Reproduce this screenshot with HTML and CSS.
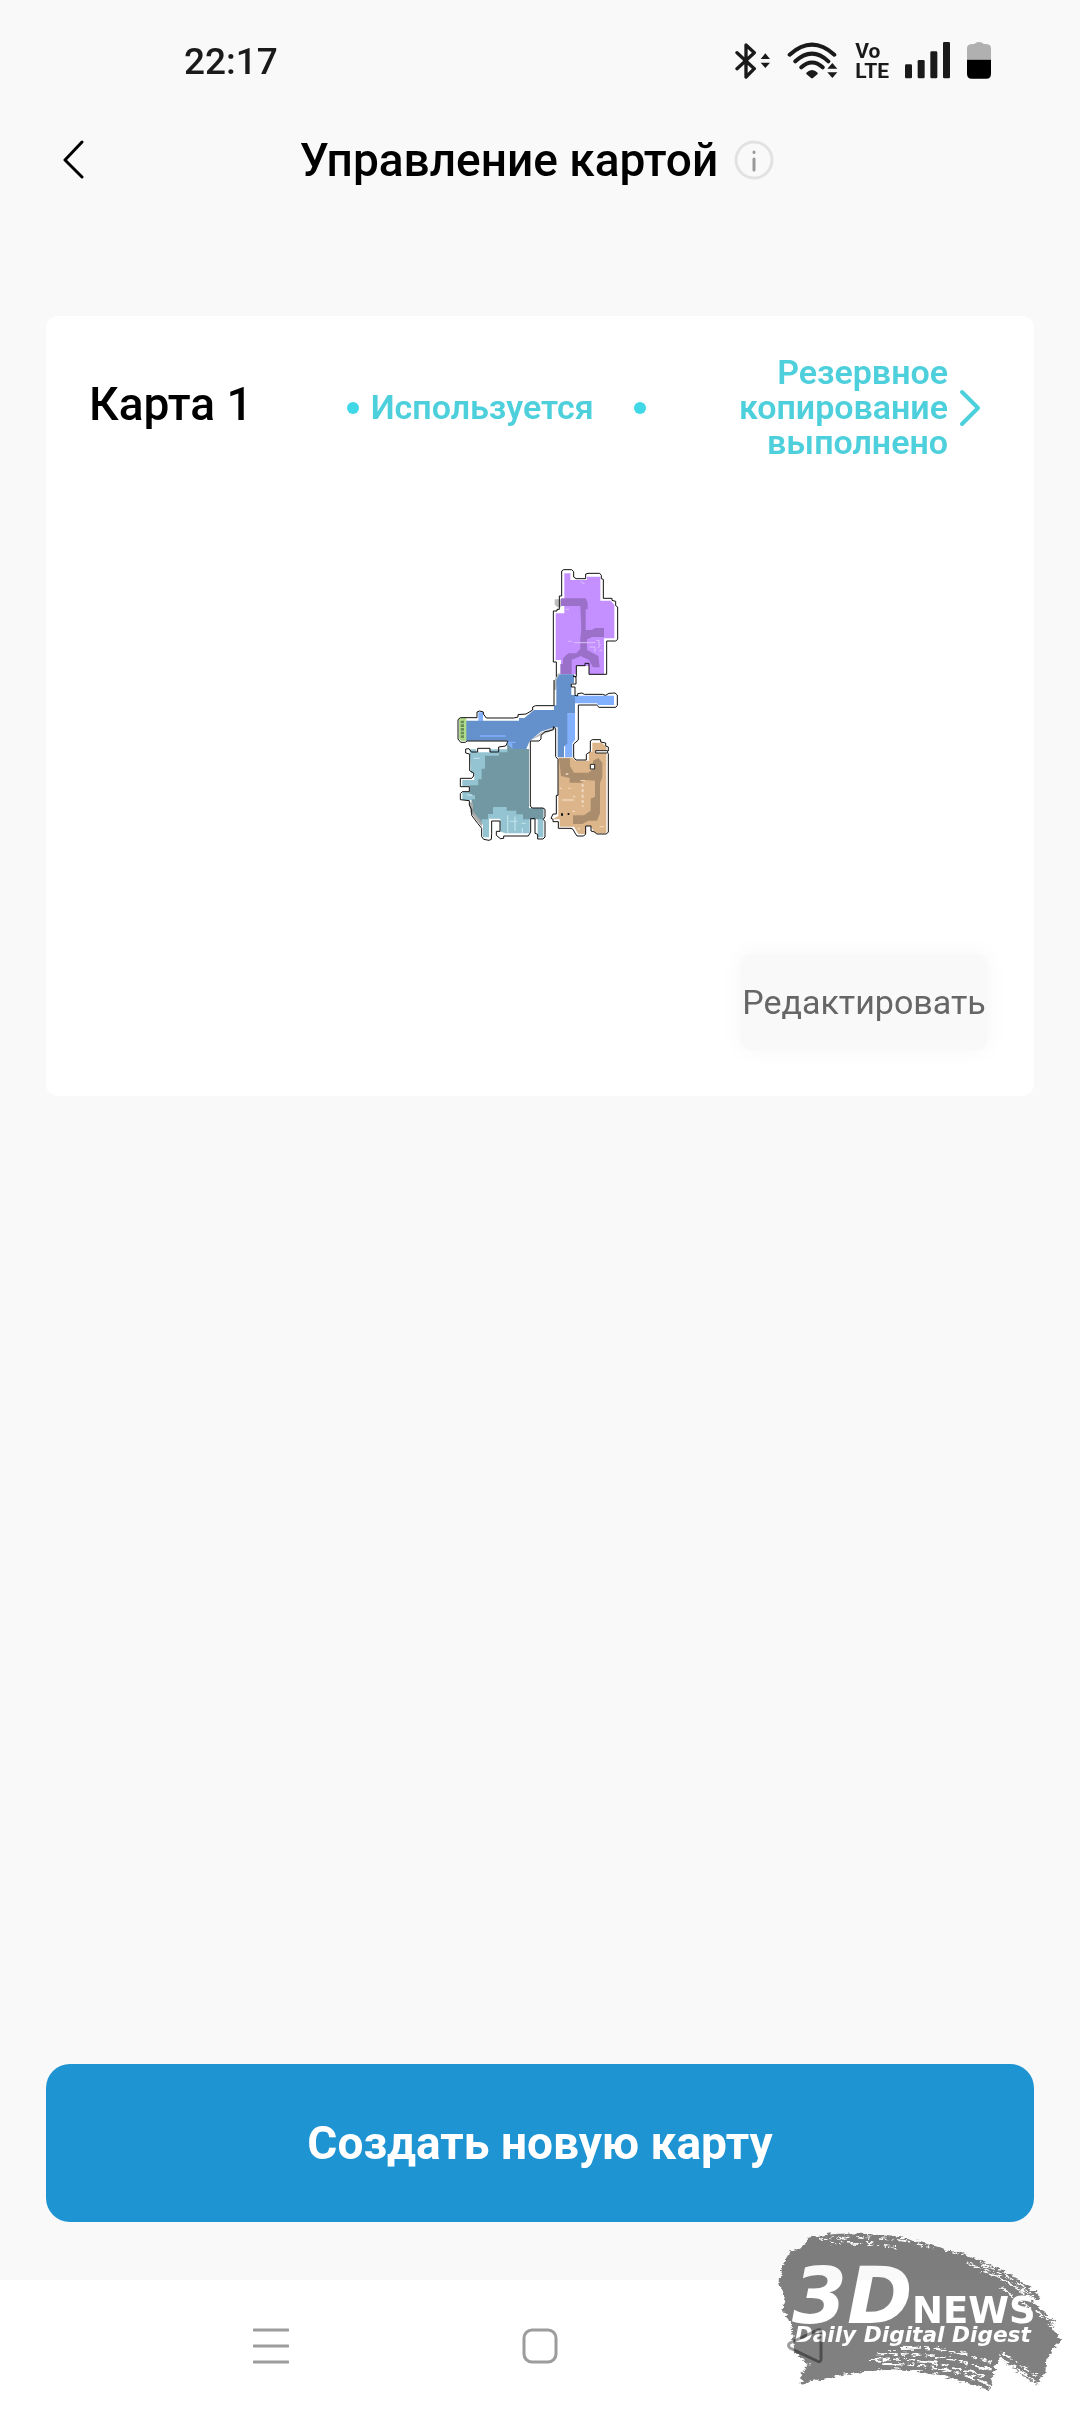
FILE: index.html
```
<!DOCTYPE html>
<html lang="ru">
<head>
<meta charset="utf-8">
<meta name="viewport" content="width=device-width, initial-scale=1">
<title>Управление картой</title>
<link rel="stylesheet" href="styles.css">
</head>
<body>
<div class="status-bar">
  <time class="clock">22:17</time>
  <div class="status-icons">
    <svg width="36" height="38" viewBox="0 0 108 114" aria-label="Bluetooth">
      <path d="M6 32L58 80L33 105V9L58 32L6 80" fill="none" stroke="#1a1a1a" stroke-width="10" stroke-linejoin="round" stroke-linecap="round"/>
      <path d="M77 51L91 34L105 51ZM77 62L91 78L105 62Z" fill="#1a1a1a"/>
    </svg>
    <svg width="52" height="38" viewBox="0 0 156 114" aria-label="Wi-Fi">
      <path d="M8 38Q75-22 142 38M25 58Q75 12 124 58M43 76Q75 47 107 76" fill="none" stroke="#1a1a1a" stroke-width="12" stroke-linecap="round"/>
      <path d="M58 92Q75 76 92 92V96L77 109H73L58 96ZM121 80L136 63L151 80ZM121 91L136 108L151 91Z" fill="#1a1a1a"/>
    </svg>
    <span class="volte">Vo<br>LTE</span>
    <svg width="46" height="38" viewBox="0 0 138 114" fill="#1a1a1a" aria-label="Сигнал">
      <rect y="67" width="21" height="42" rx="4"/><rect x="38" y="54" width="21" height="55" rx="4"/><rect x="76" y="28" width="21" height="81" rx="4"/><rect x="114" width="21" height="109" rx="4"/>
    </svg>
    <svg width="24" height="38" viewBox="0 0 72 114" aria-label="Батарея">
      <path d="M0 53V19Q0 7 14 6H22Q26 0 36 0T50 6H58Q72 7 72 19V53Z" fill="#b0b0b0"/>
      <path d="M0 53H72V95Q72 110 58 110H14Q0 110 0 95Z"/>
    </svg>
  </div>
</div>

<header class="header">
  <button class="icon-button back" type="button" aria-label="Назад">
    <svg width="24" height="42" viewBox="0 0 24 42"><path d="M22 3L5 21L22 38" fill="none" stroke="#000" stroke-width="3" stroke-linecap="round" stroke-linejoin="round"/></svg>
  </button>
  <div class="heading">
    <h1 class="title">Управление картой</h1>
    <button class="icon-button" type="button" aria-label="Информация">
      <svg width="40" height="40" viewBox="0 0 40 40"><circle cx="20" cy="20" r="18" fill="none" stroke="#e2e2e2" stroke-width="3"/><path d="M20 12V12.5M20 19V30" stroke="#999" stroke-width="3" stroke-linecap="round"/></svg>
    </button>
  </div>
</header>

<main class="content">
  <article class="card">
    <div class="card-head">
      <h2 class="title">Карта 1</h2>
      <span class="dot"></span>
      <span class="in-use">Используется</span>
      <span class="dot"></span>
      <a class="backup" href="#backup">
        <span class="backup-text">Резервное копирование выполнено</span>
        <svg width="24" height="42" viewBox="0 0 24 42"><path d="M4 5L20 21L4 37" fill="none" stroke="#4dd0dc" stroke-width="4" stroke-linecap="round" stroke-linejoin="round"/></svg>
      </a>
    </div>

    <svg class="map" width="200" height="310" viewBox="0 0 600 930" role="img" aria-label="План помещений">
      <!-- bedroom -->
      <path d="M376 70H394V90H444V80H484V152H515L526 165V265H495V373H450V348H412V373H366V330H350V190H376Z" fill="#c48fff"/>
      <path d="M366 145H440L446 158V178H440V240H458L470 234H495V261H460L444 268V300L478 318L482 352H462L450 330L425 318L398 330V373H364V342H372V325L388 310H412L424 296V265L427 240L424 168H366Z" fill="#9a70c8"/>
      <path d="M347 148H366V172H356L347 164Z" fill="#bdbdbd"/>
      <path d="M388 274h10m6 4h64m4-7h8v14m-28 6h16v14m16-22l-7 12m4 6h8M425 95l12 7M380 178h10" fill="none" stroke="#ddc4ff" stroke-width="3"/>
      <!-- corridor -->
      <path d="M352 375L362 368V390L350 420H345V395ZM270 573L305 548L350 530V537L308 555Z" fill="#bbb"/>
      <path d="M404 437H525V465H475V460H404ZM380 490H408V570L400 580V622H378ZM118 515V487H132V515ZM205 570H240V596H205Z" fill="#82b0ff"/>
      <path d="M362 373H405V400H397V435H408V490H385V580L375 590V622H356V532H345L305 545L272 573L262 597H220V580H205V572H80V512H240V504H256L285 480H345V466H352V390Z" fill="#6490cb"/>
      <path d="M122 558H200M205 577H230" stroke="#82b0ff" stroke-width="4"/>
      <path d="M60 504H82V573H66L60 565Z" fill="#b2dc8a"/>
      <path d="M70 512V568" stroke="#688d58" stroke-width="10" stroke-dasharray="8 3"/>
      <!-- living room -->
      <path d="M92 598H112V607H152V598H208L270 597V775H313V862H296V806H272V850H200L184 845V806H150V862H132V825L98 785V750H70V726H94V708H70V690H106V670H96Z" fill="#94c3d2"/>
      <path d="M205 580L220 597H270V775H313V808H252V793H232V782H203V771H162V792H147V808H128V828L98 788V748H108V736H92V706H118V688H128V656H138V617H180V607H205Z" fill="#7299a3"/>
      <path d="M206 796V850M228 800V842M212 814H235M248 820H260M250 835V850M85 735H100M104 625H122" stroke="#bce0e9" stroke-width="4"/>
      <path d="M90 755L94 787L128 830V815L102 784V760Z" fill="#aaa"/>
      <!-- kitchen -->
      <path d="M358 623H400L410 632H450V605H460V578H488L502 590V850H468L455 828H440V852H418L405 830H362V808H340L358 798Z" fill="#ddb58a"/>
      <path d="M360 625H393V648L405 668H448L462 658V632L478 624L490 638V680L483 700V790L474 812H448L430 822H402V796H435L455 782V746L468 740V692L440 690L428 698H392V684L366 678Z" fill="#aa8d6d"/>
      <path d="M370 750H404M424 692h14M380 672h8M362 715h7M388 715h7M402 740h7M400 784h8M482 830h12M416 836h7" stroke="#f1d8bd" stroke-width="4"/>
      <path d="M431 702V770" stroke="#efd9c2" stroke-width="6" stroke-dasharray="9 7"/>
      <path d="M454 643h13v14h-13ZM470 602h36v7h-36Z" fill="#fff" stroke="#222" stroke-width="3"/>
      <path d="M366 790h6v7h-6ZM386 789h5v6h-5Z" fill="#111"/>
      <!-- walls -->
      <g fill="none" stroke="#111" stroke-width="3">
        <path d="M352 380V336H343V183H354V178H361V138H368V63L374 59H398L404 65V81L411 86H440V72L447 70H482L487 76V86L493 88V145H519V151L530 154V167L536 171V268L530 273H503V373H450V340H438V347H412V380L402 378L411 382V402H397V411H408V436L416 438V431L429 429L436 433H490L500 436L510 430L528 429L535 435V466L530 472H480L473 465H418V570L404 582V622L411 630H442V613L454 605V573L460 569H485V576L500 579V588L508 591V603"/>
        <path d="M508 610V846L502 852H473L467 846L456 843V828H440V852L434 858H414L408 849L402 838L396 835H358V815H342V808L336 805L342 792H352V736H357V628L350 620V536L343 530V539L330 543L318 545L306 556V567L300 573H274V768L279 774H312L318 778V800L313 808L318 815V861L312 867H296V853L288 850V806H275V846L268 858H194V865L184 866L172 856V844H183V813H158V850L157 868L150 871L134 868L128 860V835L116 820L98 796V779L91 765V752L64 749V731L70 725H91V710H64V685H98L104 678V669L92 662V612L80 609V597L90 596L97 606H116V595H153V606H179V591L200 588L205 578V573H84L79 577L65 577L57 567V509L64 503H114V486L122 483L133 486V492L142 504H224L237 501V494L261 492L281 480V471L290 467H345V390"/>
      </g>
    </svg>

    <button class="edit-button" type="button">Редактировать</button>
  </article>
</main>

<div class="actions">
  <button class="create-button" type="button">Создать новую карту</button>
</div>

<nav class="system-nav" aria-label="Системная навигация">
  <button class="icon-button" type="button" aria-label="Недавние"><svg width="36" height="36" viewBox="0 0 36 36"><path d="M1 2H35M1 18H35M1 34H35" stroke="#9c9c9c" stroke-width="3" stroke-linecap="round"/></svg></button>
  <button class="icon-button" type="button" aria-label="Домой"><svg width="36" height="36" viewBox="0 0 36 36"><rect x="2" y="2" width="32" height="32" rx="8" fill="none" stroke="#9c9c9c" stroke-width="3"/></svg></button>
  <button class="icon-button" type="button" aria-label="Назад"><svg width="44" height="36" viewBox="0 0 44 36"><path d="M31 2Q34 1 34 5V31Q34 35 30 33L3 20Q0 17 3 15Z" fill="none" stroke="#9c9c9c" stroke-width="3"/></svg></button>
</nav>

<svg class="watermark" width="320" height="202" viewBox="0 0 960 606" role="img" aria-label="3DNews Daily Digital Digest">
  <defs>
    <filter id="rough" x="-5%" y="-5%" width="110%" height="110%" color-interpolation-filters="sRGB">
      <feTurbulence type="fractalNoise" baseFrequency=".04 .12" numOctaves="3" seed="4" result="noise"/>
      <feDisplacementMap in="SourceGraphic" in2="noise" scale="22" xChannelSelector="R" yChannelSelector="G"/>
    </filter>
  </defs>
  <g filter="url(#rough)">
    <path d="M140 84Q220 66 330 72Q460 84 570 122Q700 158 780 212Q830 240 842 266L820 276L884 336L868 344L904 392L880 412L858 460L856 490L830 526L720 444L706 470L690 540L600 512Q510 480 400 478Q250 486 126 522L122 488L150 464L104 428L92 330L66 300L76 274L58 222L64 170L92 126L142 100Z" fill="#808080"/>
    <g fill="none" stroke="#fff">
      <path d="M180 88Q270 78 340 86M360 84Q460 92 520 116M210 100Q300 92 420 116" stroke-width="5" stroke-dasharray="22 9 6 14 40 20"/>
      <path d="M650 146Q770 190 838 256M660 160Q770 206 832 270M620 158Q760 214 850 292M690 190Q800 240 870 325M720 232L880 340" stroke-width="5" stroke-dasharray="50 8 16 9 30 12"/>
      <path d="M420 414Q560 406 700 460M350 430Q540 424 704 486M330 450Q530 440 700 510M370 462Q550 460 690 526" stroke-width="6" stroke-dasharray="60 12 18 14 30 10"/>
      <path d="M724 426L846 510M718 440L840 524" stroke-width="6" stroke-dasharray="36 10 14 8"/>
    </g>
  </g>
  <g class="wordmark" fill="#fff">
    <text class="wordmark-3d" x="96" y="340">3D</text>
    <text class="wordmark-news" x="456" y="340">NEWS</text>
    <text class="wordmark-tagline" x="104" y="397">Daily Digital Digest</text>
  </g>
</svg>
</body>
</html>
```
FILE: styles.css
```
* {
  box-sizing: border-box;
}

body {
  position: relative;
  display: flex;
  flex-direction: column;
  min-height: 100vh;
  margin: 0;
  background: #f9f9f9;
  color: #000;
  font-family: Roboto, "Liberation Sans", sans-serif;
}

svg {
  display: block;
  flex: none;
}

button {
  border: 0;
  font: inherit;
}

.status-bar {
  display: flex;
  align-items: center;
  justify-content: space-between;
  height: 122px;
  padding: 0 89px 0 184px;
  color: #1a1a1a;
}

.clock {
  font-size: 37px;
  font-weight: 500;
}

.status-icons {
  display: flex;
  align-items: center;
  gap: 16px;
}

.volte {
  font-size: 21px;
  font-weight: 700;
  line-height: 20px;
}

.header {
  display: grid;
  grid-template-columns: 1fr auto 1fr;
  align-items: center;
  height: 76px;
  padding: 0 66px 0 60px;
}

.heading {
  display: flex;
  align-items: center;
  gap: 16px;
}

.back {
  justify-self: start;
}

.icon-button {
  padding: 0;
  background: none;
}

.title {
  margin: 0;
  font-size: 46px;
  font-weight: 500;
  line-height: 56px;
}

.content {
  flex: 1;
  padding: 118px 46px 46px;
}

.card {
  display: flex;
  flex-direction: column;
  padding: 39px 46px 46px 43px;
  border-radius: 12px;
  background: #fff;
}

.card-head {
  display: flex;
  align-items: center;
  color: #4dd0dc;
  font-size: 34px;
  font-weight: 600;
  line-height: 35px;
}

.card-head .title {
  margin-right: 94px;
  padding-bottom: 8px;
  color: #000;
}

.dot {
  flex: none;
  width: 12px;
  height: 12px;
  border-radius: 50%;
  background: #40d8e6;
}

.in-use {
  margin: 0 40px 0 12px;
}

.backup {
  display: flex;
  flex: 1;
  align-items: center;
  gap: 10px;
  padding-right: 6px;
  color: inherit;
  text-decoration: none;
}

.backup-text {
  flex: 1;
  text-align: right;
}

.map {
  align-self: center;
  margin: 90px 0 94px;
}

.edit-button {
  align-self: flex-end;
  min-width: 248px;
  height: 96px;
  padding: 0;
  border-radius: 12px;
  background: #f9f9f9;
  box-shadow: 0 0 24px #f6f6f6;
  color: #666;
  font-size: 34px;
}

.actions {
  padding: 0 46px 58px;
}

.create-button {
  width: 100%;
  height: 158px;
  border-radius: 24px;
  background: #1f94d3;
  color: #fff;
  font-size: 46px;
  font-weight: 700;
}

.system-nav {
  display: grid;
  grid-template-columns: repeat(3, 1fr);
  justify-items: center;
  align-items: center;
  height: 132px;
  padding: 0 137px;
  background: #fff;
}

.watermark {
  position: absolute;
  right: 0;
  bottom: 0;
  mix-blend-mode: multiply;
  pointer-events: none;
}

.wordmark {
  font-family: "DejaVu Sans", sans-serif;
  font-weight: 700;
}

.wordmark-3d {
  font-size: 237px;
  font-style: oblique;
}

.wordmark-news {
  font-size: 111px;
}

.wordmark-tagline {
  font-size: 65px;
  font-style: oblique;
}
```
